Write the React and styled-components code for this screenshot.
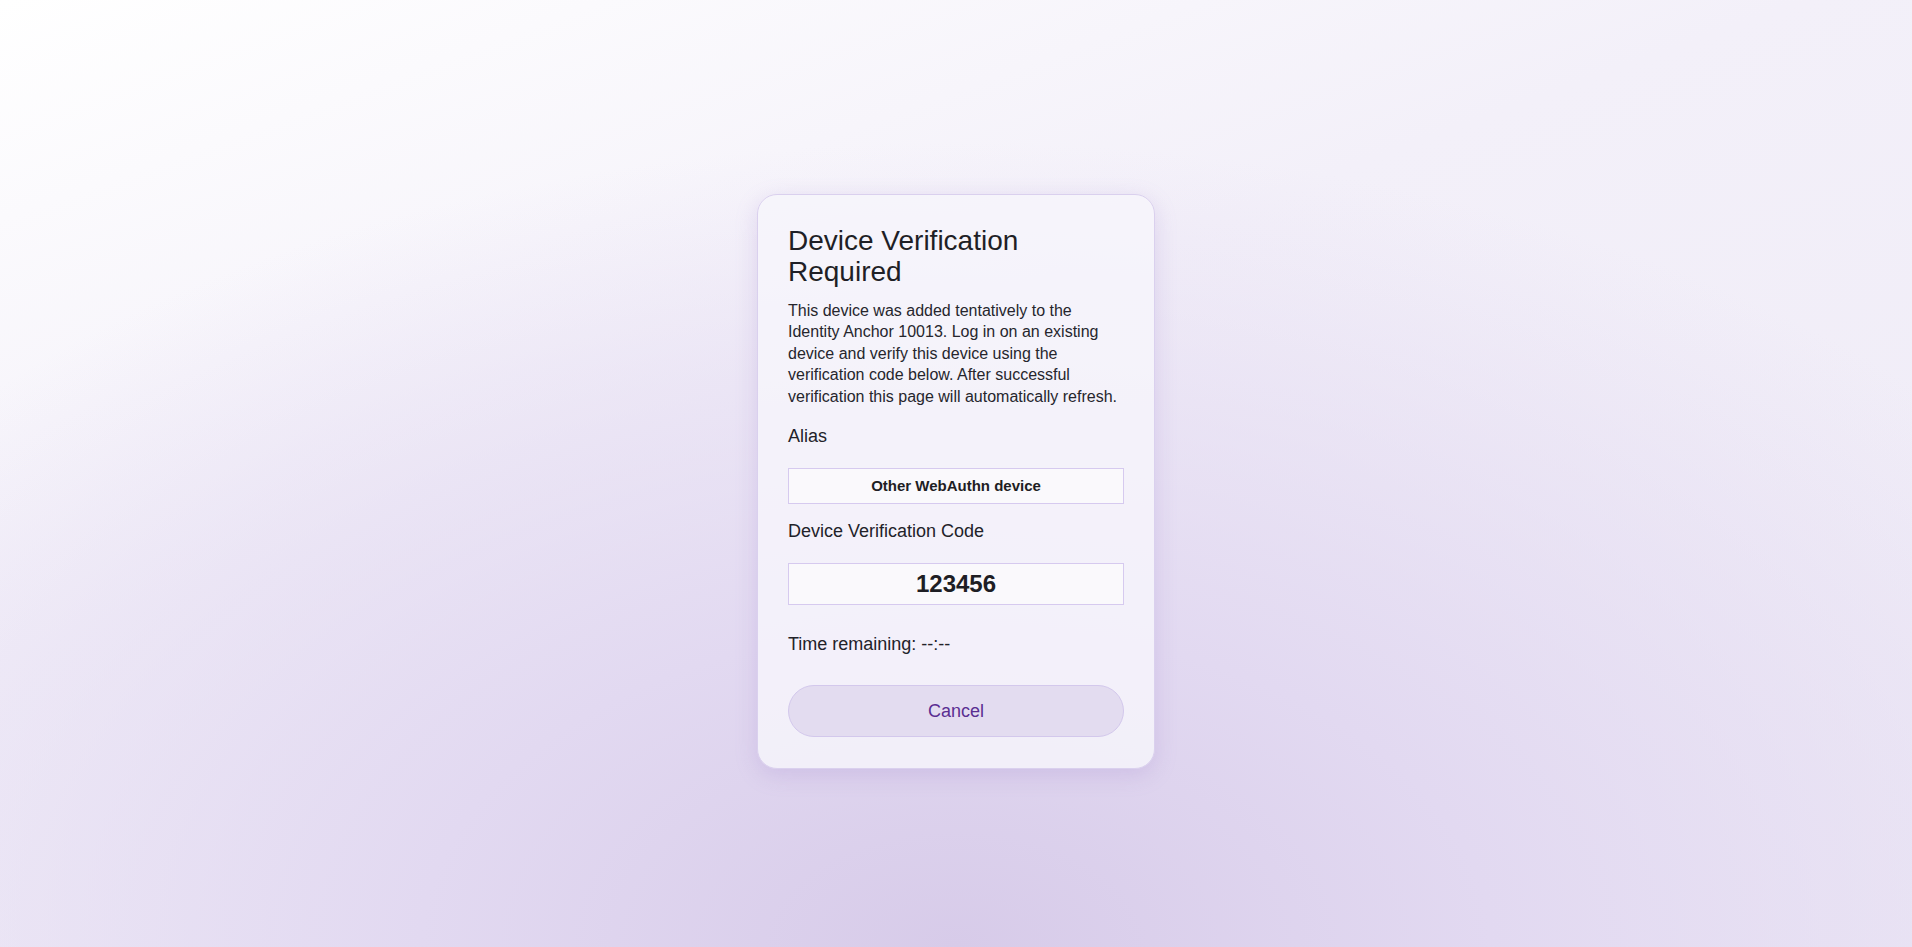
import React from 'react'
import styled, { createGlobalStyle } from 'styled-components';

const GlobalStyle = createGlobalStyle`
    * {
        box-sizing: border-box;
    }
    html, body {
        margin: 0;
        padding: 0;
        height: 100%;
    }
    body {
        font-family: "Liberation Sans", Arial, sans-serif;
        color: #202027;
        background:
            radial-gradient(ellipse 70% 85% at 50% 100%, #d7cbe9 0%, #e2d9f1 40%, rgba(240, 236, 248, 0) 100%),
            linear-gradient(160deg, #ffffff 0%, #f3f0f9 40%, #eeeaf6 100%);
        background-attachment: fixed;
    }
    #root {
        min-height: 100%;
    }
`;

export default function App() {
    return (
        <Page>
            <GlobalStyle />
            <Card>
                <Title>Device Verification Required</Title>
                <Intro>
                    This device was added tentatively to the Identity Anchor 10013. Log in on an existing
                    device and verify this device using the verification code below. After successful
                    verification this page will automatically refresh.
                </Intro>
                <Label>Alias</Label>
                <Field>Other WebAuthn device</Field>
                <Label>Device Verification Code</Label>
                <Field big>123456</Field>
                <Timer>Time remaining: --:--</Timer>
                <CancelButton>Cancel</CancelButton>
            </Card>
        </Page>
    )
}

const Page = styled.main`
    min-height: 947px;
    display: flex;
    justify-content: center;
    padding-top: 194px;
`;

const Card = styled.section`
    width: 398px;
    align-self: flex-start;
    display: flex;
    flex-direction: column;
    padding: 30px 30px 31px;
    background: rgba(247, 245, 251, 0.82);
    border: 1px solid #dad0ee;
    border-radius: 20px;
    box-shadow: 0 6px 22px rgba(150, 120, 200, 0.22);
`;

const Title = styled.h1`
    margin: 0;
    font-size: 28px;
    font-weight: 400;
    line-height: 31.3px;
    color: #1f1f26;
`;

const Intro = styled.p`
    margin: 12px 0 0;
    font-size: 16px;
    line-height: 21.5px;
    color: #26262d;
`;

const Label = styled.h3`
    margin: 19px 0 0;
    font-size: 18px;
    font-weight: 400;
    line-height: 20.7px;
    color: #222229;
    & + div {
        margin-top: 21px;
    }
`;

const Field = styled.div`
    height: ${p => p.big ? '42px' : '36px'};
    display: flex;
    align-items: center;
    justify-content: center;
    background: #faf9fc;
    border: 1px solid #d6caef;
    font-size: ${p => p.big ? '24px' : '15px'};
    font-weight: 700;
    color: #1e1e24;
    & + h3 {
        margin-top: 17px;
    }
`;

const Timer = styled.p`
    margin: 29px 0 0;
    font-size: 18px;
    line-height: 20.7px;
    color: #222229;
`;

const CancelButton = styled.button`
    margin-top: 31px;
    height: 52px;
    width: 100%;
    border-radius: 26px;
    border: 1px solid #d3c8ec;
    background: #e3dcf0;
    color: #5a2e92;
    font-family: "Liberation Sans", Arial, sans-serif;
    font-size: 18px;
    cursor: pointer;
`;
